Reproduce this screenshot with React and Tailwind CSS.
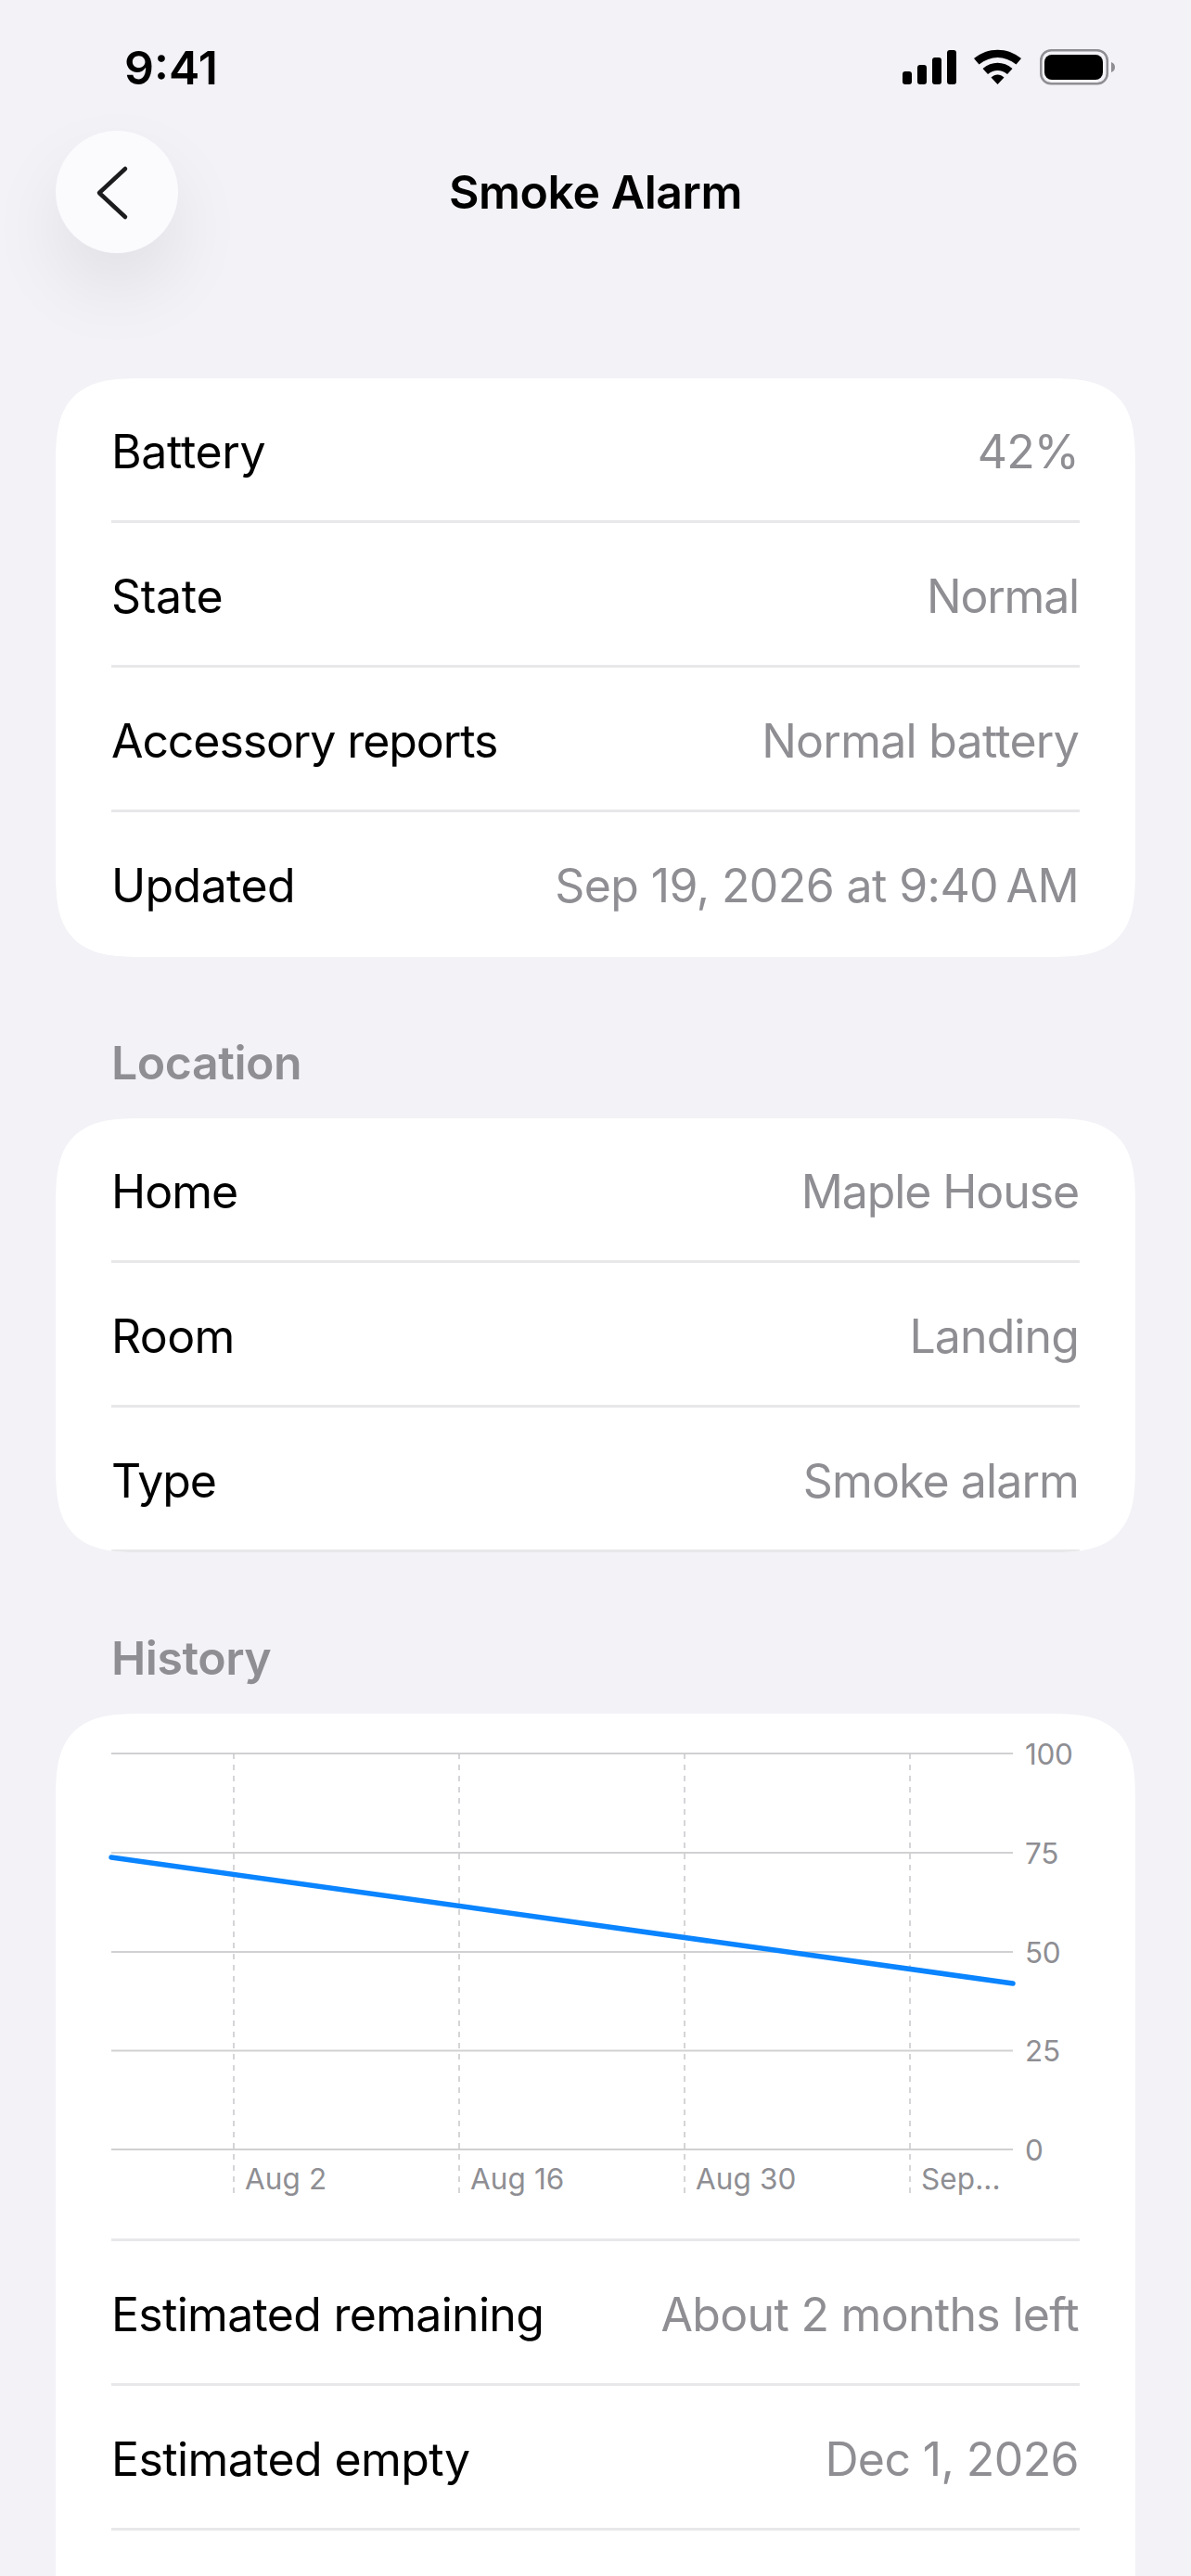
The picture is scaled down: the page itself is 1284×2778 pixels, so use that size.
const font = { fontFamily: '"Inter", "Liberation Sans", sans-serif' };

function Row({ label, value, last, labelTrack = "tracking-[-0.6px]", valueTrack = "tracking-[-0.6px]" }) {
  return (
    <div className="mx-[60px] h-[156px] pt-[2px] flex items-center justify-between relative">
      <span className={"text-[50px] leading-[60px] text-black whitespace-nowrap " + labelTrack}>{label}</span>
      <span className={"mr-[1px] text-[50px] leading-[60px] text-[#8e8e93] whitespace-nowrap " + valueTrack}>{value}</span>
      {!last && <div className="absolute left-0 right-0 bottom-0 h-[3px] bg-[#e8e8ea]" />}
    </div>
  );
}

function Card({ children }) {
  return <div className="mx-[60px] bg-white rounded-[96px] [corner-shape:superellipse(1.6)] overflow-hidden">{children}</div>;
}

function Section({ children }) {
  return <div className="mx-[120px] h-[60px] mt-[84px] mb-[30px] flex items-center text-[50px] leading-[60px] font-semibold text-[#8e8e93] tracking-[-0.45px]">{children}</div>;
}

function StatusIcons() {
  return (
    <svg width="242" height="50" viewBox="0 0 242 50" className="block">
      <g fill="#000">
        <rect x="13" y="27" width="10" height="14" rx="3" />
        <rect x="29" y="20" width="10" height="21" rx="3" />
        <rect x="45" y="12" width="10" height="29" rx="3" />
        <rect x="61" y="4" width="10" height="37" rx="3" />
        <path d="M90 13 C105 0.5 126 0.5 141 13 L135.5 19.5 C123 9.5 108 9.5 95.5 19.5 Z" />
        <path d="M99.5 24 C109 15.5 122 15.5 131.5 24 L126 30 C119.5 24.5 111.5 24.5 105 30 Z" />
        <path d="M108.5 33.5 C113 29.5 118 29.5 122.5 33.5 L115.5 41 Z" />
      </g>
      <rect x="162.25" y="4.25" width="71.5" height="36" rx="11" fill="none" stroke="#8e8e93" strokeWidth="2.5" />
      <rect x="166" y="9" width="63" height="27" rx="8" fill="#000" />
      <path d="M238 17 C241 18 242 20 242 22.5 C242 25 241 27 238 28 Z" fill="#8e8e93" />
    </svg>
  );
}

function Chart() {
  const ys = [[43, "100"], [150, "75"], [257, "50"], [363.5, "25"], [470, "0"]];
  const xs = [[192, "Aug 2"], [435, "Aug 16"], [678, "Aug 30"], [921, "Sep..."]];
  return (
    <svg width="1164" height="566" viewBox="0 0 1164 566" className="block" style={font}>
      {ys.map(([y, t]) => (
        <g key={t}>
          <line x1="60" x2="1032" y1={y} y2={y} stroke="#d1d1d3" strokeWidth="2" />
          <text x="1045" y={y + 11.5} fontSize="31.5" letterSpacing="-0.3" fill="#8e8e93">{t}</text>
        </g>
      ))}
      {xs.map(([x, t]) => (
        <g key={t}>
          <line x1={x} x2={x} y1="43" y2="518" stroke="#c7c7cc" strokeWidth="1.5" strokeDasharray="6 6" />
          <text x={x + 12} y="513" fontSize="31.5" letterSpacing="0.1" fill="#8e8e93">{t}</text>
        </g>
      ))}
      <line x1="60" y1="155" x2="1032" y2="291" stroke="#0a84ff" strokeWidth="5.5" strokeLinecap="round" />
    </svg>
  );
}

export default function App() {
  return (
    <div className="w-[1284px] h-[2778px] overflow-hidden bg-[#f2f2f7] antialiased" style={font}>
      <div className="h-[141px] relative">
        <div className="absolute left-[134px] top-[43px] text-[50px] leading-[60px] font-semibold text-black tracking-[0px]">9:41</div>
        <div className="absolute left-[960px] top-[50px]"><StatusIcons /></div>
      </div>
      <div className="h-[132px] relative flex items-center justify-center">
        <div className="absolute left-[60px] top-0 w-[132px] h-[132px] rounded-full bg-[#fbfbfe] shadow-[0_38px_80px_rgba(0,0,0,0.08)] flex items-center justify-center">
          <svg width="132" height="132" viewBox="0 0 132 132" fill="none">
            <path d="M75 41 L47 67 L75 93" stroke="#1c1c1e" strokeWidth="4.5" strokeLinecap="round" strokeLinejoin="round" />
          </svg>
        </div>
        <span className="text-[50px] leading-[60px] font-semibold text-black tracking-[-0.45px]">Smoke Alarm</span>
      </div>
      <div className="h-[135px]" />
      <Card>
        <Row label="Battery" value="42%" labelTrack="tracking-[-0.35px]" valueTrack="tracking-[-0.9px]" />
        <Row label="State" value="Normal" labelTrack="tracking-[-0.3px]" valueTrack="tracking-[-1.2px]" />
        <Row label="Accessory reports" value="Normal battery" labelTrack="tracking-[-1.1px]" valueTrack="tracking-[-0.75px]" />
        <Row label="Updated" value={"Sep 19, 2026 at 9:40\u202FAM"} last />
      </Card>
      <Section>Location</Section>
      <Card>
        <Row label="Home" value="Maple House" labelTrack="tracking-[-1px]" valueTrack="tracking-[-1.1px]" />
        <Row label="Room" value="Landing" valueTrack="tracking-[-0.9px]" />
        <Row label="Type" value="Smoke alarm" labelTrack="tracking-[-1px]" valueTrack="tracking-[-0.9px]" />
      </Card>
      <Section>History</Section>
      <Card>
        <Chart />
        <div className="mx-[60px] h-[3px] bg-[#e8e8ea]" />
        <Row label="Estimated remaining" value="About 2 months left" labelTrack="tracking-[-0.7px]" valueTrack="tracking-[-0.7px]" />
        <Row label="Estimated empty" value="Dec 1, 2026" />
        <div className="h-[200px]" />
      </Card>
    </div>
  );
}
